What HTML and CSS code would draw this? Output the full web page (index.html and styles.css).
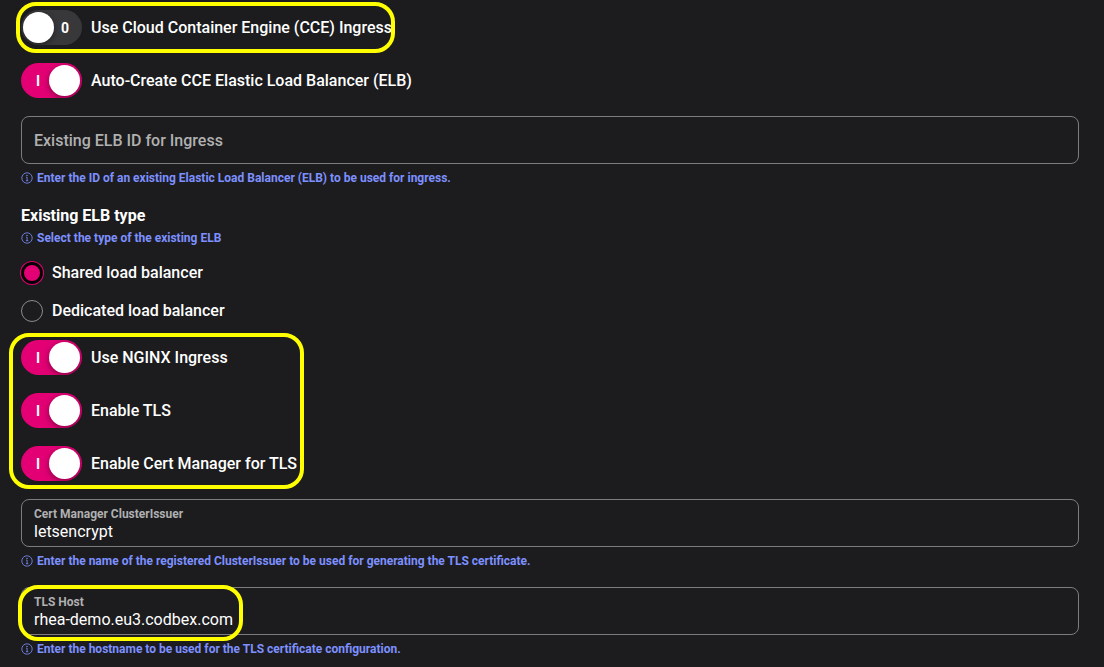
FILE: index.html
```html
<!DOCTYPE html>
<html lang="en">
<head>
<meta charset="utf-8">
<meta name="viewport" content="width=device-width, initial-scale=1">
<title>Ingress configuration</title>
<link rel="stylesheet" href="styles.css">
</head>
<body>
<svg class="sprite" aria-hidden="true">
  <symbol id="info" viewBox="0 0 12 12">
    <circle cx="6" cy="6" r="5.2" fill="none" stroke="currentColor" stroke-width=".8"/>
    <path d="M5.1 5.1H6.1V8.7M4.9 8.7H7.3" fill="none" stroke="currentColor" stroke-width=".8"/>
    <circle cx="6" cy="3.4" r=".7" fill="currentColor"/>
  </symbol>
</svg>
<form class="form">
  <div class="marked">
    <label class="switch"><input type="checkbox" role="switch"><span class="track"><span class="state">0</span></span>Use Cloud Container Engine (CCE) Ingress</label>
    <span class="mark mark-cce"></span>
  </div>
  <label class="switch"><input type="checkbox" role="switch" checked><span class="track"><span class="state">I</span></span>Auto-Create CCE Elastic Load Balancer (ELB)</label>

  <div class="group">
    <div class="field"><input type="text" class="empty" aria-label="Existing ELB ID for Ingress" aria-describedby="elb-help" placeholder="Existing ELB ID for Ingress"></div>
    <p class="help" id="elb-help"><svg class="icon"><use href="#info"/></svg>Enter the ID of an existing Elastic Load Balancer (ELB) to be used for ingress.</p>
  </div>

  <fieldset class="radios">
    <legend>Existing ELB type</legend>
    <p class="help"><svg class="icon"><use href="#info"/></svg>Select the type of the existing ELB</p>
    <div class="options">
      <label class="radio"><input type="radio" name="elb" checked>Shared load balancer</label>
      <label class="radio"><input type="radio" name="elb">Dedicated load balancer</label>
    </div>
  </fieldset>

  <div class="marked switches">
    <label class="switch"><input type="checkbox" role="switch" checked><span class="track"><span class="state">I</span></span>Use NGINX Ingress</label>
    <label class="switch"><input type="checkbox" role="switch" checked><span class="track"><span class="state">I</span></span>Enable TLS</label>
    <label class="switch"><input type="checkbox" role="switch" checked><span class="track"><span class="state">I</span></span>Enable Cert Manager for TLS</label>
    <span class="mark mark-tls"></span>
  </div>

  <div class="group">
    <div class="field"><label for="issuer">Cert Manager ClusterIssuer</label><input type="text" id="issuer" value="letsencrypt"></div>
    <p class="help"><svg class="icon"><use href="#info"/></svg>Enter the name of the registered ClusterIssuer to be used for generating the TLS certificate.</p>
  </div>
  <div class="group last">
    <div class="field marked"><label for="host">TLS Host</label><input type="text" id="host" value="rhea-demo.eu3.codbex.com"><span class="mark mark-host"></span></div>
    <p class="help"><svg class="icon"><use href="#info"/></svg>Enter the hostname to be used for the TLS certificate configuration.</p>
  </div>
</form>
</body>
</html>
```
FILE: styles.css
```css
* { box-sizing: border-box; }
body {
  margin: 0;
  background: #1c1c1e;
  color: #fff;
  font: 500 16px/24px Roboto, "Liberation Sans", sans-serif;
}
.sprite { position: absolute; width: 0; height: 0; }
.form {
  display: flex;
  flex-direction: column;
  gap: 18px;
  padding: 10px 25px 8px 21px;
}
.marked { position: relative; }
.mark {
  position: absolute;
  border: 4px solid #ff0;
  border-radius: 20px;
  pointer-events: none;
}
.mark-cce { left: -5px; top: -8px; width: 379px; height: 51px; }
.mark-tls { left: -12px; top: -7px; width: 295px; height: 156px; }
.mark-host { left: -4px; top: -3px; width: 225px; height: 56px; }

.switch {
  display: flex;
  align-items: center;
  gap: 9px;
  width: fit-content;
}
.switch input { position: absolute; opacity: 0; }
.track {
  display: flex;
  align-items: center;
  flex-direction: row-reverse;
  justify-content: space-between;
  width: 61px;
  height: 35px;
  padding: 0 13px 0 2px;
  border-radius: 18px;
  background: #38383a;
  overflow: hidden;
}
.track::after {
  content: "";
  width: 31px;
  height: 31px;
  border-radius: 50%;
  background: #fff;
  box-shadow: 0 2px 6px rgba(0, 0, 0, .4);
}
.state { font-size: 14px; font-weight: 700; }
.switch input:checked + .track {
  flex-direction: row;
  padding: 0 2px 0 15px;
  background: #e20074;
}
.switches { display: flex; flex-direction: column; gap: 18px; }

.field {
  display: flex;
  flex-direction: column;
  padding: 6px 12px 4px;
  min-height: 48px;
  border: 1px solid #7c7c7e;
  border-radius: 8px;
}
.field label { color: #b0b0b1; font-size: 12px; font-weight: 700; line-height: 16px; }
.field input {
  width: 100%;
  padding: 0;
  border: 0;
  outline: 0;
  background: none;
  color: #fff;
  font: inherit;
  font-weight: 400;
  line-height: 20px;
}
.field .empty { flex: 1; font-weight: 500; }
.field input::placeholder { color: #b0b0b1; opacity: 1; }
.help {
  display: flex;
  align-items: center;
  gap: 4px;
  margin: 0;
  color: #7d90ff;
  font-size: 12px;
  font-weight: 700;
  line-height: 20px;
}
.group .help { margin-top: 4px; }
.icon { width: 12px; height: 12px; flex: none; }

.radios { margin: -2px 0 0; padding: 0; border: 0; }
.radios legend { padding: 0; font-weight: 700; }
.options { display: flex; flex-direction: column; gap: 14px; margin: 13px 0 -1px; }
.radio { display: flex; align-items: center; gap: 9px; }
.radio input {
  appearance: none;
  width: 22px;
  height: 22px;
  margin: 0;
  border: 1px solid #8c8c8e;
  border-radius: 50%;
}
.radio input:checked {
  border: 3px solid #000;
  background: #e20074;
  box-shadow: 0 0 0 1px #e20074;
}
.last { margin-top: -2px; }
```
